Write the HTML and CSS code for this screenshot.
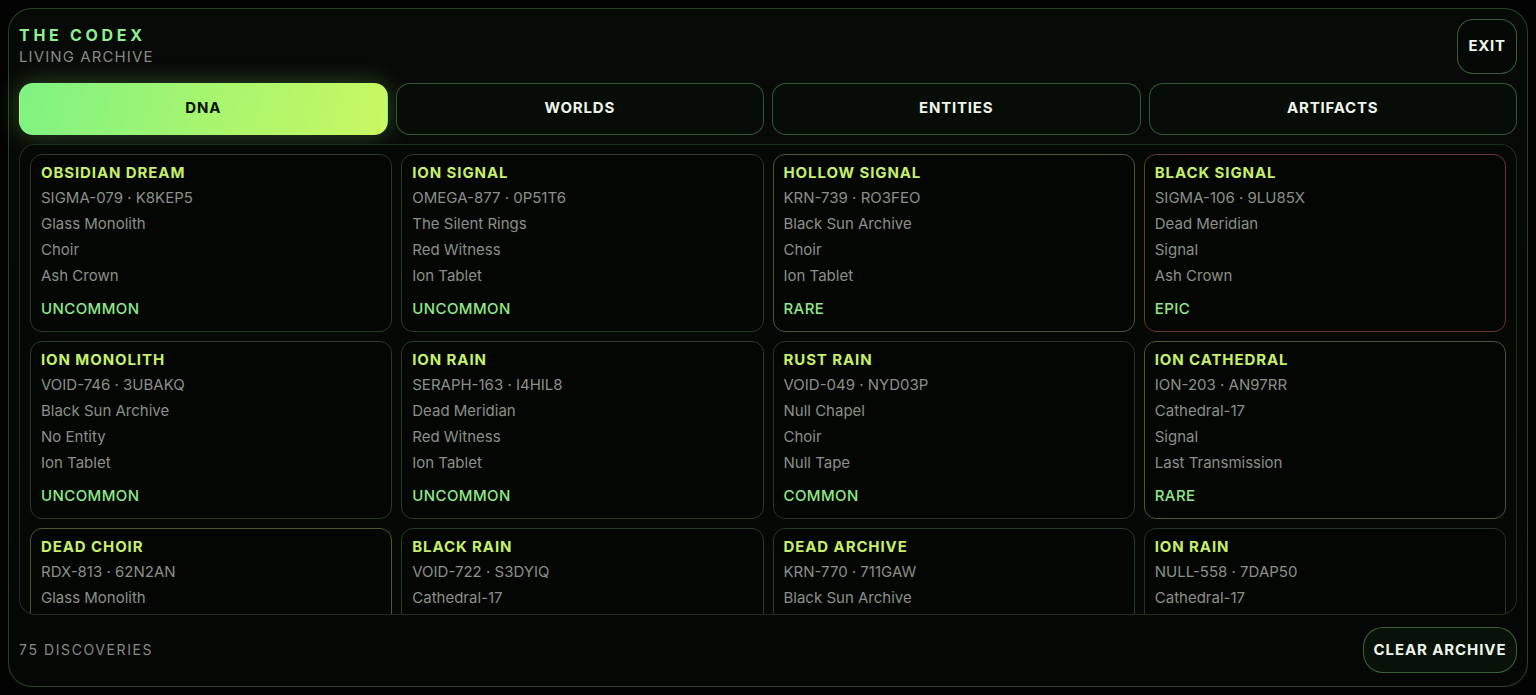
FILE: index.html
```html
<!DOCTYPE html>
<html lang="en">
<head>
<meta charset="utf-8">
<title>The Codex</title>
<link rel="stylesheet" href="styles.css">
</head>
<body>
<div class="panel">
  <header class="top">
    <div class="brand">
      <div class="brand-title">THE CODEX</div>
      <div class="brand-sub">LIVING ARCHIVE</div>
    </div>
    <button class="exit">EXIT</button>
  </header>
  <nav class="tabs">
    <button class="tab active">DNA</button>
    <button class="tab">WORLDS</button>
    <button class="tab">ENTITIES</button>
    <button class="tab">ARTIFACTS</button>
  </nav>
  <section class="grid-wrap">
    <div class="grid">
      <div class="card uncommon"><div class="name">OBSIDIAN DREAM</div><div class="line">SIGMA-079 · K8KEP5</div><div class="line">Glass Monolith</div><div class="line">Choir</div><div class="line">Ash Crown</div><div class="rarity">UNCOMMON</div></div>
      <div class="card uncommon"><div class="name">ION SIGNAL</div><div class="line">OMEGA-877 · 0P51T6</div><div class="line">The Silent Rings</div><div class="line">Red Witness</div><div class="line">Ion Tablet</div><div class="rarity">UNCOMMON</div></div>
      <div class="card rare"><div class="name">HOLLOW SIGNAL</div><div class="line">KRN-739 · RO3FEO</div><div class="line">Black Sun Archive</div><div class="line">Choir</div><div class="line">Ion Tablet</div><div class="rarity">RARE</div></div>
      <div class="card epic"><div class="name">BLACK SIGNAL</div><div class="line">SIGMA-106 · 9LU85X</div><div class="line">Dead Meridian</div><div class="line">Signal</div><div class="line">Ash Crown</div><div class="rarity">EPIC</div></div>

      <div class="card uncommon"><div class="name">ION MONOLITH</div><div class="line">VOID-746 · 3UBAKQ</div><div class="line">Black Sun Archive</div><div class="line">No Entity</div><div class="line">Ion Tablet</div><div class="rarity">UNCOMMON</div></div>
      <div class="card uncommon"><div class="name">ION RAIN</div><div class="line">SERAPH-163 · I4HIL8</div><div class="line">Dead Meridian</div><div class="line">Red Witness</div><div class="line">Ion Tablet</div><div class="rarity">UNCOMMON</div></div>
      <div class="card common"><div class="name">RUST RAIN</div><div class="line">VOID-049 · NYD03P</div><div class="line">Null Chapel</div><div class="line">Choir</div><div class="line">Null Tape</div><div class="rarity">COMMON</div></div>
      <div class="card rare"><div class="name">ION CATHEDRAL</div><div class="line">ION-203 · AN97RR</div><div class="line">Cathedral-17</div><div class="line">Signal</div><div class="line">Last Transmission</div><div class="rarity">RARE</div></div>

      <div class="card rare"><div class="name">DEAD CHOIR</div><div class="line">RDX-813 · 62N2AN</div><div class="line">Glass Monolith</div></div>
      <div class="card uncommon"><div class="name">BLACK RAIN</div><div class="line">VOID-722 · S3DYIQ</div><div class="line">Cathedral-17</div></div>
      <div class="card uncommon"><div class="name">DEAD ARCHIVE</div><div class="line">KRN-770 · 711GAW</div><div class="line">Black Sun Archive</div></div>
      <div class="card common"><div class="name">ION RAIN</div><div class="line">NULL-558 · 7DAP50</div><div class="line">Cathedral-17</div></div>
    </div>
  </section>
  <footer class="bottom">
    <div class="count">75 DISCOVERIES</div>
    <button class="clear">CLEAR ARCHIVE</button>
  </footer>
</div>
</body>
</html>
```

FILE: styles.css
```css
* { box-sizing: border-box; }

html, body {
  margin: 0;
  height: 100%;
  background: #020302;
  font-family: Inter, "Noto Sans", sans-serif;
  color: #e8f0e6;
  overflow: hidden;
}

.panel {
  margin: 8px;
  height: 679px;
  border: 1px solid rgba(98, 160, 96, 0.38);
  border-radius: 24px;
  background: linear-gradient(180deg, #070a07 0%, #050705 100%);
  padding: 10px 10px 13px 10px;
  display: flex;
  flex-direction: column;
  gap: 9px;
}

.top {
  display: flex;
  justify-content: space-between;
  align-items: flex-start;
  height: 55px;
  flex: none;
}

.brand { padding-top: 6px; }

.brand-title {
  font-size: 16px;
  line-height: 20px;
  font-weight: 700;
  letter-spacing: 3.7px;
  color: #8ef08e;
}

.brand-sub {
  margin-top: 3px;
  font-size: 15px;
  line-height: 18px;
  letter-spacing: 1.1px;
  color: #858b84;
}

button {
  font-family: inherit;
  cursor: pointer;
}

.exit {
  width: 60px;
  height: 55px;
  border-radius: 16px;
  border: 1.5px solid rgba(98, 160, 96, 0.55);
  background: #050905;
  color: #eef5ec;
  font-size: 15px;
  font-weight: 700;
  letter-spacing: 0.7px;
  padding: 0 0 2px 0;
}

.tabs {
  display: grid;
  grid-template-columns: repeat(4, 1fr);
  gap: 8px;
  flex: none;
}

.tab {
  height: 52px;
  border-radius: 14px;
  border: 1.5px solid rgba(98, 160, 96, 0.5);
  background: #060c06;
  color: #eef5ec;
  font-size: 15px;
  font-weight: 700;
  letter-spacing: 0.8px;
  padding: 0 0 3px 0;
}

.tab.active {
  border-color: transparent;
  background: linear-gradient(100deg, #7ef383 0%, #a6f56f 50%, #c9f862 100%);
  color: #061006;
  box-shadow: 0 0 26px rgba(150, 240, 110, 0.28);
}

.grid-wrap {
  flex: 1;
  min-height: 0;
  border: 1px solid rgba(90, 150, 88, 0.28);
  border-radius: 16px;
  background: #050805;
  padding: 9px 10px;
  overflow: hidden;
}

.grid {
  display: grid;
  grid-template-columns: repeat(4, 1fr);
  gap: 9px;
}

.card {
  min-height: 178px;
  border: 1.5px solid #263b25;
  border-radius: 12px;
  background: #040604;
  padding: 6px 10px 9px 10px;
}

.card.rare { border-color: #4b5833; }
.card.epic { border-color: #653a28; }
.card.common { border-color: #283327; }

.name {
  font-size: 15px;
  line-height: 24px;
  font-weight: 700;
  letter-spacing: 0.9px;
  color: #c6f06a;
}

.line {
  font-size: 15px;
  line-height: 26px;
  color: #8a9088;
}

.rarity {
  margin-top: 7px;
  font-size: 15px;
  line-height: 26px;
  font-weight: 500;
  letter-spacing: 0.4px;
  color: #8ee98a;
}

.bottom {
  flex: none;
  display: flex;
  justify-content: space-between;
  align-items: center;
  margin-top: 3px;
}

.count {
  font-size: 14px;
  letter-spacing: 1.6px;
  color: #858b84;
  padding-bottom: 2px;
}

.clear {
  height: 46px;
  width: 154px;
  border-radius: 20px;
  border: 1.5px solid rgba(98, 160, 96, 0.55);
  background: #081208;
  color: #eef5ec;
  font-size: 15px;
  font-weight: 700;
  letter-spacing: 0.9px;
  padding: 0 0 2px 0;
}
```
